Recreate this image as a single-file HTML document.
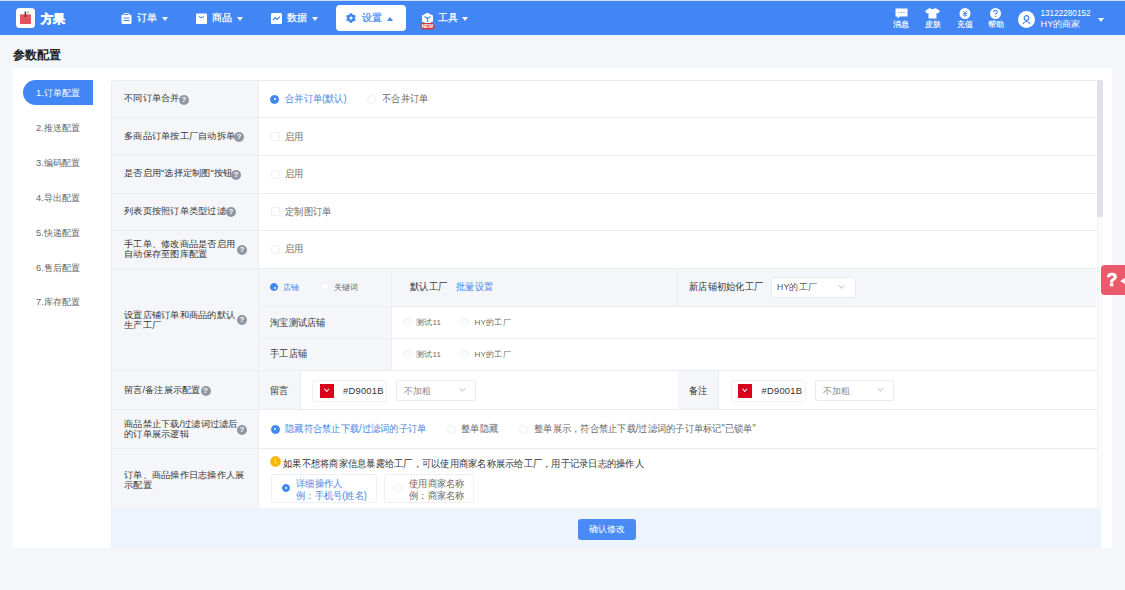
<!DOCTYPE html>
<html><head><meta charset="utf-8">
<style>
*{box-sizing:border-box;margin:0;padding:0}
html,body{width:1125px;height:590px;overflow:hidden;background:#f4f6f9;font-family:"Liberation Sans",sans-serif;color:#333;font-size:9.2px}
div,span,svg{position:absolute}
span.i{position:static}
#topstrip{left:0;top:0;width:1125px;height:1px;background:#cfe0f8}
#nav{left:0;top:1px;width:1125px;height:34px;background:#4286f5}
.logo{left:16px;top:8px;width:19px;height:20px;background:#fff;border-radius:3.5px}
.brand{left:40.5px;top:11.5px;color:#fff;font-weight:bold;font-size:12px;letter-spacing:0.5px;line-height:14px;-webkit-text-stroke:0.6px #fff;white-space:nowrap}
.nt{-webkit-text-stroke-width:0.2px;top:11.5px;color:#fff;font-size:10px;letter-spacing:0.4px;line-height:12px;white-space:nowrap}
.tri{width:0;height:0;border-left:3px solid transparent;border-right:3px solid transparent;border-top:4.5px solid #fff}
.act{left:336px;top:5px;width:70px;height:26px;background:#fff;border-radius:4px}
.rt{-webkit-text-stroke-width:0.15px;color:#fff;font-size:8.2px;line-height:9px;top:19.6px;white-space:nowrap}
.title{left:13px;top:47.5px;font-size:12px;font-weight:bold;color:#222;line-height:14px;white-space:nowrap}
#card{left:13px;top:68px;width:1099px;height:480px;background:#fff}
.menu{left:36px;font-size:9.3px;color:#666;line-height:10px;white-space:nowrap}
.pill{left:23px;top:80px;width:70px;height:25px;background:#4286f5;border-radius:12.5px 0 0 12.5px}
.row{left:111px;width:986px;border-bottom:1px solid #ebedf1;background:#fff}
.lab{left:0;top:0;width:148px;height:100%;background:#f5f6fa;border-right:1px solid #ebedf1}
.lt{left:123.5px;font-size:10px;transform:scale(0.925,0.9);transform-origin:0 0;color:#333;line-height:10.5px;white-space:nowrap}
.q{width:10px;height:10px;border-radius:50%;background:#9097a3;color:#fff;font-size:8px;line-height:10px;text-align:center;font-weight:bold}
.v{font-size:10px;transform:scaleX(0.925);transform-origin:0 0;line-height:10px;white-space:nowrap;color:#6a6a6a}
.rad{width:9.4px;height:9.4px;border-radius:50%;border:1px solid #eceef1;background:#fff}
.rad.on{background:#4286f5;border-color:#4286f5}
.rad.on::after{content:"";position:absolute;left:2.7px;top:2.7px;width:2px;height:2px;border-radius:50%;background:#fff}
.chk{width:9.4px;height:9.4px;border:1px solid #eff0f3;border-radius:2px;background:#fff}
.blue{color:#4a86e8}
.v.s{transform:none;letter-spacing:0.24px}
.footer{left:111px;top:508px;width:990px;height:40px;background:#eef4fd}
.btn{left:578px;top:519px;width:58px;height:21px;background:#4a8af4;border-radius:3px;color:#fff;font-size:9.3px;line-height:21px;text-align:center}
.sel{border:1px solid #e9ebef;border-radius:2px;background:#fff}
.caret{width:5px;height:5px;border-right:1px solid #c0c4cc;border-bottom:1px solid #c0c4cc;transform:rotate(45deg)}
</style></head><body>
<div id="topstrip"></div>
<div id="nav"></div>
<div class="logo"></div>
<svg style="left:16px;top:8px" width="19" height="20" viewBox="0 0 19 20">
 <rect x="4" y="6.4" width="10.9" height="9.6" fill="#e8505b"/>
 <rect x="8.6" y="3.5" width="1.5" height="5.5" fill="#5a3a3a"/>
 <path d="M10 5.2 L13 3 L12.6 5.2 Z" fill="#6bbf4a"/>
</svg>
<div class="brand">方果</div>

<!-- nav items -->
<svg style="left:121px;top:13px" width="11" height="11" viewBox="0 0 11 11">
 <rect x="0.5" y="1.5" width="10" height="9.5" rx="1.5" fill="#fff"/>
 <rect x="3" y="0" width="5" height="2.5" rx="0.8" fill="#fff"/>
 <rect x="3.5" y="0.9" width="4" height="1.1" fill="#4286f5"/>
 <rect x="2.5" y="4.5" width="6" height="1" fill="#4286f5"/>
 <rect x="2.5" y="7" width="6" height="1" fill="#4286f5"/>
</svg>
<div class="nt" style="left:137px">订单</div>
<div class="tri" style="left:161.5px;top:17px"></div>

<svg style="left:196px;top:12.5px" width="11" height="11" viewBox="0 0 11 11">
 <rect x="0" y="0.5" width="11" height="10.5" rx="0.8" fill="#fff"/>
 <path d="M3.2 3 Q5.5 6.5 7.8 3" stroke="#4286f5" stroke-width="1.1" fill="none"/>
</svg>
<div class="nt" style="left:212px">商品</div>
<div class="tri" style="left:236.5px;top:17px"></div>

<svg style="left:271px;top:13px" width="11" height="11" viewBox="0 0 11 11">
 <rect x="0" y="0" width="11" height="11" rx="1.5" fill="#fff"/>
 <path d="M2 7 L4.2 4.6 L6.2 6.4 L9 3.6" stroke="#4286f5" stroke-width="1.2" fill="none"/>
</svg>
<div class="nt" style="left:287px">数据</div>
<div class="tri" style="left:312px;top:17px"></div>

<div class="act"></div>
<svg style="left:346px;top:13px" width="10" height="10" viewBox="0 0 10 10">
 <g fill="#4286f5"><circle cx="5" cy="5" r="3.6"/><circle cx="5" cy="1.6" r="1.6"/><circle cx="5" cy="8.4" r="1.6"/><circle cx="2.05" cy="3.3" r="1.6"/><circle cx="7.95" cy="3.3" r="1.6"/><circle cx="2.05" cy="6.7" r="1.6"/><circle cx="7.95" cy="6.7" r="1.6"/></g>
 <circle cx="5" cy="5" r="1.5" fill="#fff"/>
</svg>
<div class="nt" style="left:361.5px;color:#4286f5">设置</div>
<div style="left:386.5px;top:16.5px;width:0;height:0;border-left:3px solid transparent;border-right:3px solid transparent;border-bottom:4.5px solid #4286f5"></div>

<svg style="left:420px;top:12px" width="15" height="18" viewBox="0 0 15 18">
 <path d="M7.5 0.8 L13 3.6 L13 9.6 L7.5 12 L2 9.6 L2 3.6 Z" fill="#fff"/>
 <path d="M4.5 4.5 L7.5 6.5 L10.5 4.5 M7.5 6.5 L7.5 10" stroke="#4286f5" stroke-width="1.2" fill="none"/>
 <rect x="0.5" y="11" width="14" height="6.5" rx="3.2" fill="#d9363e"/>
 <text x="7.5" y="16.2" font-size="5" font-weight="bold" fill="#fff" text-anchor="middle" font-family="Liberation Sans">NEW</text>
</svg>
<div class="nt" style="left:438px">工具</div>
<div class="tri" style="left:461.5px;top:17px"></div>

<!-- right icons -->
<svg style="left:894.5px;top:7.5px" width="13" height="11" viewBox="0 0 13 11">
 <path d="M0.5 0.5 H12.5 V8.5 H5 L2.5 10.5 V8.5 H0.5 Z" fill="#fff"/>
 <circle cx="4" cy="4.5" r="0.6" fill="#4286f5"/><circle cx="6.5" cy="4.5" r="0.6" fill="#4286f5"/><circle cx="9" cy="4.5" r="0.6" fill="#4286f5"/>
</svg>
<div class="rt" style="left:892.5px">消息</div>
<svg style="left:925px;top:8px" width="15" height="11" viewBox="0 0 15 11">
 <path d="M4.5 0 L6 0.8 Q7.5 1.6 9 0.8 L10.5 0 L15 3 L13 5.5 L11.5 4.8 L11.5 10.5 L3.5 10.5 L3.5 4.8 L2 5.5 L0 3 Z" fill="#fff"/>
</svg>
<div class="rt" style="left:924.5px">皮肤</div>
<svg style="left:958.5px;top:7.5px" width="12" height="11" viewBox="0 0 12 11">
 <circle cx="6" cy="5.5" r="5.5" fill="#fff"/>
 <path d="M4 3 L6 5 L8 3 M3.8 5.6 H8.2 M3.8 7.2 H8.2 M6 5 V9" stroke="#4286f5" stroke-width="0.9" fill="none"/>
</svg>
<div class="rt" style="left:956.5px">充值</div>
<svg style="left:990px;top:7.5px" width="11" height="11" viewBox="0 0 11 11">
 <circle cx="5.5" cy="5.5" r="5.5" fill="#fff"/>
 <path d="M3.7 4.2 Q3.7 2.4 5.5 2.4 Q7.3 2.4 7.3 4 Q7.3 5 6.2 5.5 Q5.5 5.9 5.5 6.8" stroke="#4286f5" stroke-width="1.1" fill="none"/>
 <circle cx="5.5" cy="8.4" r="0.7" fill="#4286f5"/>
</svg>
<div class="rt" style="left:988px">帮助</div>
<svg style="left:1017.5px;top:10.5px" width="17" height="17" viewBox="0 0 17 17">
 <circle cx="8.5" cy="8.5" r="8.5" fill="#fff"/>
 <circle cx="8.5" cy="7" r="2.3" stroke="#4286f5" stroke-width="1.2" fill="none"/>
 <path d="M4.8 12.8 Q8.5 8.2 12.2 12.8" stroke="#4286f5" stroke-width="1.2" fill="none"/>
</svg>
<div style="left:1040.5px;top:9px;color:#fff;font-size:8.2px;line-height:9px;white-space:nowrap">13122280152</div>
<div style="left:1040.5px;top:19px;color:#fff;font-size:9.2px;line-height:10px;white-space:nowrap">HY的商家</div>
<div class="tri" style="left:1098px;top:17.8px"></div>

<div class="title">参数配置</div>
<div id="card"></div>
<div class="pill"></div>
<div class="menu" style="left:36px;top:87.5px;color:#fff">1.订单配置</div>
<div class="menu" style="top:122.5px">2.推送配置</div>
<div class="menu" style="top:157.5px">3.编码配置</div>
<div class="menu" style="top:192.5px">4.导出配置</div>
<div class="menu" style="top:227.5px">5.快递配置</div>
<div class="menu" style="top:263px">6.售后配置</div>
<div class="menu" style="top:297px">7.库存配置</div>

<div style="left:111px;top:80px;width:986px;height:428px;border-top:1px solid #e8eaee;border-left:1px solid #ebedf1;border-top-left-radius:3px;z-index:2"></div>

<!-- row 1 -->
<div class="row" style="top:81px;height:37px"><div class="lab"></div></div>
<div class="lt" style="top:94px">不同订单合并</div><div class="q" style="left:179px;top:95px">?</div>
<div class="rad on" style="left:270px;top:94.5px"></div><div class="v blue" style="left:285px;top:94px">合并订单(默认)</div>
<div class="rad" style="left:367px;top:94.5px"></div><div class="v" style="left:382px;top:94px">不合并订单</div>
<!-- row 2 -->
<div class="row" style="top:118px;height:38px"><div class="lab"></div></div>
<div class="lt" style="top:131.5px">多商品订单按工厂自动拆单</div><div class="q" style="left:234px;top:132px">?</div>
<div class="chk" style="left:270.5px;top:132px"></div><div class="v" style="left:285px;top:131.5px">启用</div>
<!-- row 3 -->
<div class="row" style="top:156px;height:38px"><div class="lab"></div></div>
<div class="lt" style="top:169px">是否启用"选择定制图"按钮</div><div class="q" style="left:231px;top:169.5px">?</div>
<div class="chk" style="left:270.5px;top:169.5px"></div><div class="v" style="left:285px;top:169px">启用</div>
<!-- row 4 -->
<div class="row" style="top:194px;height:37px"><div class="lab"></div></div>
<div class="lt" style="top:206.5px">列表页按照订单类型过滤</div><div class="q" style="left:226px;top:207px">?</div>
<div class="chk" style="left:270.5px;top:207px"></div><div class="v" style="left:285px;top:206.5px">定制图订单</div>
<!-- row 5 -->
<div class="row" style="top:231px;height:38px"><div class="lab"></div></div>
<div class="lt" style="top:240px">手工单、修改商品是否启用<br>自动保存至图库配置</div><div class="q" style="left:237px;top:245px">?</div>
<div class="chk" style="left:270.5px;top:244.5px"></div><div class="v" style="left:285px;top:244px">启用</div>
<!-- row 6 -->
<div class="row" style="top:269px;height:102px"><div class="lab"></div></div>
<div class="lt" style="top:310.5px">设置店铺订单和商品的默认<br>生产工厂</div><div class="q" style="left:237px;top:314.5px">?</div>
<div style="left:259px;top:269px;width:837px;height:38px;background:#f5f6fa;border-bottom:1px solid #ebedf1"></div>
<div style="left:259px;top:307px;width:132px;height:63px;background:#f5f6fa"></div>
<div style="left:259px;top:338px;width:837px;height:1px;background:#ebedf1"></div>
<div style="left:391px;top:269px;width:1px;height:101px;background:#ebedf1"></div>
<div style="left:677px;top:269px;width:1px;height:37px;background:#ebedf1"></div>
<div class="rad on" style="left:270px;top:283px;width:8.2px;height:8.2px"></div><div class="v s blue" style="left:283px;top:282.5px;font-size:8.2px">店铺</div>
<div class="rad" style="left:320.5px;top:283px;width:8.2px;height:8.2px;border-color:#f0f1f4"></div><div class="v s" style="left:333.5px;top:282.5px;font-size:8.2px">关键词</div>
<div class="v" style="left:409.5px;top:282px;color:#333">默认工厂</div><div class="v blue" style="left:456px;top:282px">批量设置</div>
<div class="v" style="left:689px;top:282px;color:#333">新店铺初始化工厂</div>
<div class="sel" style="left:770.5px;top:276.5px;width:85px;height:21px"></div>
<div class="v s" style="left:777px;top:282px;font-size:8.6px;color:#555">HY的工厂</div>
<div class="caret" style="left:839px;top:283px;transform:rotate(45deg) scale(0.9);border-color:#c8ccd3"></div>
<div class="v" style="left:270px;top:317.5px;color:#333">淘宝测试店铺</div>
<div class="rad" style="left:403px;top:318px;width:8px;height:8px"></div><div class="v s" style="left:416px;top:318px;font-size:8px">测试11</div>
<div class="rad" style="left:461px;top:318px;width:8px;height:8px"></div><div class="v s" style="left:474.5px;top:318px;font-size:8px">HY的工厂</div>
<div class="v" style="left:270px;top:349px;color:#333">手工店铺</div>
<div class="rad" style="left:403px;top:350px;width:8px;height:8px"></div><div class="v s" style="left:416px;top:350px;font-size:8px">测试11</div>
<div class="rad" style="left:461px;top:350px;width:8px;height:8px"></div><div class="v s" style="left:474.5px;top:350px;font-size:8px">HY的工厂</div>
<!-- row 7 -->
<div class="row" style="top:371px;height:39px"><div class="lab"></div></div>
<div class="lt" style="top:386px">留言/备注展示配置</div><div class="q" style="left:200.5px;top:386px">?</div>
<div style="left:259px;top:371px;width:42px;height:38px;background:#f5f6fa;border-right:1px solid #ebedf1"></div>
<div class="v" style="left:270px;top:385.5px;color:#333">留言</div>
<div class="sel" style="left:312px;top:379.5px;width:75px;height:22px;border-color:#f1f2f4"></div>
<div style="left:319.5px;top:383.5px;width:14px;height:14px;background:#d9001b"></div>
<div class="caret" style="left:324.5px;top:387px;width:3.5px;height:3.5px;border-color:#fff"></div>
<div class="v s" style="left:343px;top:386px;color:#333;font-size:9.4px">#D9001B</div>
<div class="sel" style="left:396px;top:380px;width:80px;height:21px"></div>
<div class="v s" style="left:404px;top:386px;color:#888;font-size:9px">不加粗</div>
<div class="caret" style="left:460px;top:386px;transform:rotate(45deg) scale(0.9);border-color:#c8ccd3"></div>
<div style="left:678px;top:371px;width:41px;height:38px;background:#f5f6fa;border-right:1px solid #ebedf1"></div>
<div class="v" style="left:689px;top:385.5px;color:#333">备注</div>
<div class="sel" style="left:730.5px;top:379.5px;width:75px;height:22px;border-color:#f1f2f4"></div>
<div style="left:738px;top:383.5px;width:14px;height:14px;background:#d9001b"></div>
<div class="caret" style="left:743px;top:387px;width:3.5px;height:3.5px;border-color:#fff"></div>
<div class="v s" style="left:761.5px;top:386px;color:#333;font-size:9.4px">#D9001B</div>
<div class="sel" style="left:815px;top:380px;width:79px;height:21px"></div>
<div class="v s" style="left:822.5px;top:386px;color:#888;font-size:9px">不加粗</div>
<div class="caret" style="left:878px;top:386px;transform:rotate(45deg) scale(0.9);border-color:#c8ccd3"></div>
<!-- row 8 -->
<div class="row" style="top:410px;height:39px"><div class="lab"></div></div>
<div class="lt" style="top:419.5px">商品禁止下载/过滤词过滤后<br>的订单展示逻辑</div><div class="q" style="left:237px;top:424.5px">?</div>
<div class="rad on" style="left:270.5px;top:424.5px"></div><div class="v blue" style="left:285px;top:424px">隐藏符合禁止下载/过滤词的子订单</div>
<div class="rad" style="left:446.5px;top:424.5px"></div><div class="v" style="left:461px;top:424px">整单隐藏</div>
<div class="rad" style="left:519px;top:424.5px"></div><div class="v" style="left:533.5px;top:424px">整单展示，符合禁止下载/过滤词的子订单标记"已锁单"</div>
<!-- row 9 -->
<div class="row" style="top:449px;height:59px;border-bottom:none"><div class="lab"></div></div>
<div class="lt" style="top:470.5px">订单、商品操作日志操作人展<br>示配置</div>
<svg style="left:270px;top:456px" width="11" height="10.8" viewBox="0 0 11 10.8"><circle cx="5.5" cy="5.4" r="5.3" fill="#f8b60a"/><rect x="4.9" y="2.6" width="1" height="5.2" fill="#fde68a"/></svg>
<div class="v" style="left:283px;top:458.5px;color:#333">如果不想将商家信息暴露给工厂，可以使用商家名称展示给工厂，用于记录日志的操作人</div>
<div class="sel" style="left:270.5px;top:474px;width:106px;height:29px;border-color:#eef0f3"></div>
<div class="rad on" style="left:281.5px;top:483.5px;width:8.8px;height:8.8px"></div>
<div class="v blue" style="left:295.5px;top:478.5px">详细操作人</div>
<div class="v blue" style="left:295.5px;top:491px">例：手机号(姓名)</div>
<div class="sel" style="left:383.5px;top:474px;width:90px;height:29px;border-color:#eef0f3"></div>
<div class="rad" style="left:393.5px;top:483.5px;width:8.8px;height:8.8px;border-color:#f0f1f4"></div>
<div class="v" style="left:408.5px;top:478.5px">使用商家名称</div>
<div class="v" style="left:408.5px;top:491px">例：商家名称</div>

<div class="footer"></div>
<div class="btn">确认修改</div>
<!-- scrollbar -->
<div style="left:1097px;top:80px;width:6px;height:428px;background:#fafafb;border-left:1px solid #f1f2f4"></div>
<div style="left:1097px;top:80px;width:5.5px;height:137px;background:#dee1e6;border-radius:1px"></div>
<!-- help float -->
<div style="left:1101px;top:265px;width:30px;height:30px;background:#ea5a6a;border-radius:4px"></div>
<div style="left:1106.5px;top:269px;color:#fff;font-size:18px;font-weight:bold;line-height:22px;-webkit-text-stroke:0.6px #fff">?</div>
<div style="left:1120px;top:277.5px;width:0;height:0;border-top:3.5px solid transparent;border-bottom:3.5px solid transparent;border-right:5px solid #fff"></div>
</body></html>
